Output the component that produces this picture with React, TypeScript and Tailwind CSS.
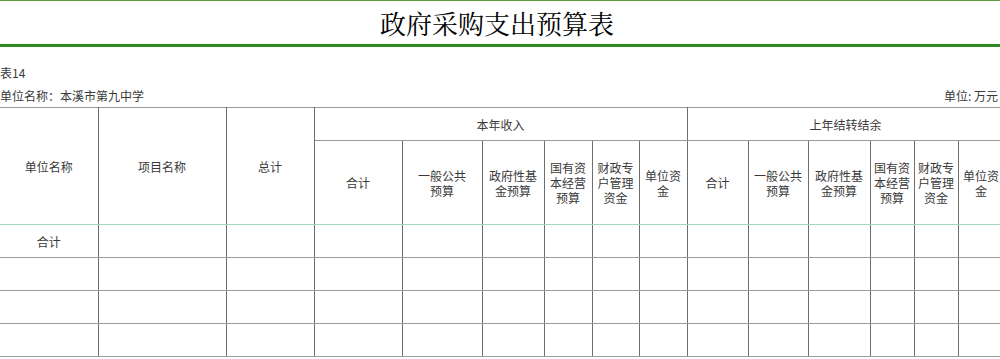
const cols = [98, 128, 88, 88, 80, 62, 48, 47, 48, 61, 60, 62, 44, 44, 46];

const subHeads: string[][] = [
  ["合计"],
  ["一般公共", "预算"],
  ["政府性基", "金预算"],
  ["国有资", "本经营", "预算"],
  ["财政专", "户管理", "资金"],
  ["单位资", "金"],
];

const cell =
  "border border-x-[#6e6e6e] border-y-[#9a9a9a] text-center align-middle font-normal";

function Lines({ lines }: { lines: string[] }) {
  return (
    <>
      {lines.map((l, i) => (
        <span className="block" key={i}>
          {l}
        </span>
      ))}
    </>
  );
}

export default function App() {
  const rows = ["合计", "", "", ""];
  return (
    <main
      className="h-[359px] w-[1000px] overflow-hidden bg-white text-[#3a3a3a]"
      style={{ fontFamily: '"Noto Sans CJK SC", "Noto Sans", sans-serif' }}
    >
      <header className="flex h-[47px] items-center justify-center border-t border-b-[3px] border-t-[#5c9e3c] border-b-[#2f8a22] pr-[6px]">
        <h1
          className="text-[26px] leading-none text-black"
          style={{ fontFamily: '"Noto Serif CJK SC", "Liberation Serif", "Noto Sans CJK SC", serif' }}
        >
          政府采购支出预算表
        </h1>
      </header>

      <p className="mt-[17px] h-[18px] text-[12px] leading-[18px]">表14</p>
      <div className="mt-[4px] flex h-[20px] items-center justify-between text-[12px] leading-[20px]">
        <span>单位名称：本溪市第九中学</span>
        <span className="pr-[2px]">单位: 万元</span>
      </div>

      <div className="mt-[1px] w-[1000px] overflow-hidden">
        <table className="w-[1004px] table-fixed border-collapse text-[12px] leading-[15px]">
          <colgroup>
            {cols.map((w, i) => (
              <col key={i} style={{ width: w }} />
            ))}
          </colgroup>
          <thead>
            <tr className="h-[33px]">
              <th rowSpan={2} className={`${cell} border-l-0 border-b-[#a3d9bb]`}>
                单位名称
              </th>
              <th rowSpan={2} className={`${cell} border-b-[#a3d9bb]`}>
                项目名称
              </th>
              <th rowSpan={2} className={`${cell} border-b-[#a3d9bb]`}>
                总计
              </th>
              <th colSpan={6} className={cell}>
                本年收入
              </th>
              <th colSpan={6} className={cell}>
                上年结转结余
              </th>
            </tr>
            <tr className="h-[84px]">
              {[...subHeads, ...subHeads].map((h, i) => (
                <th key={i} className={`${cell} border-b-[#a3d9bb]`}>
                  <Lines lines={h} />
                </th>
              ))}
            </tr>
          </thead>
          <tbody>
            {rows.map((r, ri) => (
              <tr key={ri} className="h-[33px]">
                {cols.map((_, ci) => (
                  <td key={ci} className={`${cell} ${ci === 0 ? "border-l-0" : ""}`}>
                    {ci === 0 ? r : ""}
                  </td>
                ))}
              </tr>
            ))}
          </tbody>
        </table>
      </div>
    </main>
  );
}
